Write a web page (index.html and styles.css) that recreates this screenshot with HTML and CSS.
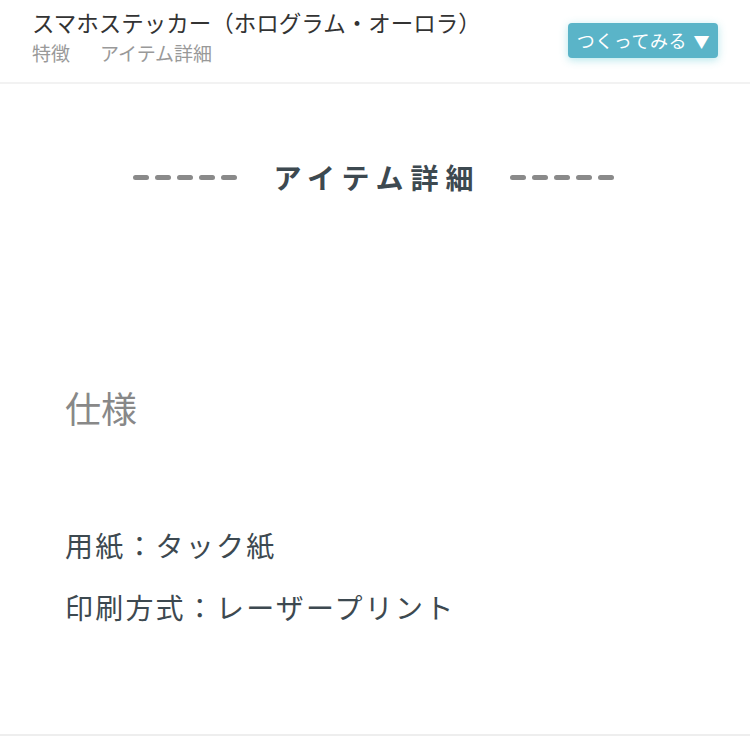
FILE: index.html
```html
<!DOCTYPE html>
<html lang="ja">
<head>
<meta charset="utf-8">
<link rel="stylesheet" href="styles.css">
</head>
<body>
<header class="header">
  <div class="header-left">
    <div class="title">スマホステッカー（ホログラム・オーロラ）</div>
    <nav class="nav">
      <span class="nav-item">特徴</span>
      <span class="nav-item">アイテム詳細</span>
    </nav>
  </div>
  <button class="cta">つくってみる <span class="tri">▼</span></button>
</header>
<main class="main">
  <div class="section-head">
    <span class="dashes"><i></i><i></i><i></i><i></i><i></i></span>
    <h2 class="section-title">アイテム詳細</h2>
    <span class="dashes"><i></i><i></i><i></i><i></i><i></i></span>
  </div>
  <h3 class="spec-title">仕様</h3>
  <ul class="spec-list">
    <li>用紙：タック紙</li>
    <li>印刷方式：レーザープリント</li>
  </ul>
</main>
<div class="footer-line"></div>
</body>
</html>
```
FILE: styles.css
```css
* { box-sizing: border-box; }
html, body {
  margin: 0;
  padding: 0;
  background: #fff;
  font-family: "Noto Sans CJK JP", "Noto Sans", sans-serif;
}
.header {
  height: 84px;
  display: flex;
  justify-content: space-between;
  align-items: flex-start;
  padding: 6px 32px 0 32px;
  border-bottom: 2px solid #f2f2f2;
}
.header-left {
  display: flex;
  flex-direction: column;
}
.title {
  font-size: 22.5px;
  line-height: 32px;
  color: #333;
}
.nav {
  display: flex;
  gap: 30px;
  margin-top: 2px;
}
.nav-item {
  font-size: 19px;
  line-height: 26px;
  color: #999;
}
.cta {
  margin-top: 17px;
  height: 35px;
  padding: 0 8px 0 9px;
  background: #5ab4c8;
  color: #fff;
  border: none;
  border-radius: 4px;
  font-family: inherit;
  font-size: 18px;
  letter-spacing: 0.5px;
  line-height: 35px;
  box-shadow: 0 2px 8px rgba(90, 200, 210, 0.45);
}
.tri { font-size: 16px; margin-left: 2px; }
.main {
  display: flow-root;
  padding: 0 65px;
  height: 650px;
}
.section-head {
  display: flex;
  justify-content: center;
  align-items: center;
  gap: 36px;
  margin-top: 72px;
  height: 42px;
  padding-right: 3px;
}
.dashes {
  display: flex;
  gap: 6px;
}
.dashes i {
  display: block;
  width: 16px;
  height: 5px;
  border-radius: 3px;
  background: #8a8a8a;
}
.section-title {
  margin: 0 -7px 0 0;
  font-size: 28px;
  font-weight: bold;
  letter-spacing: 7px;
  color: #3d4950;
  line-height: 42px;
}
.spec-title {
  margin: 184px 0 0;
  font-size: 36px;
  font-weight: normal;
  color: #888;
  line-height: 50px;
}
.spec-list {
  list-style: none;
  margin: 82px 0 0;
  padding: 0;
}
.spec-list li {
  font-size: 28px;
  letter-spacing: 2.2px;
  line-height: 62px;
  color: #3d4950;
}
.footer-line {
  height: 2px;
  background: #eeeeee;
}
```
